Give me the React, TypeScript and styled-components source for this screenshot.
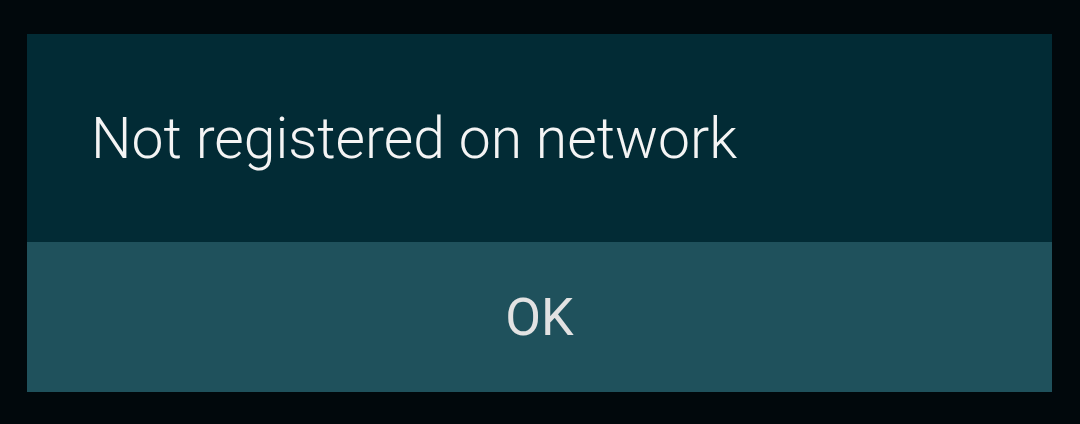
import React from "react";
import styled, { createGlobalStyle } from "styled-components";

const Global = createGlobalStyle`
  html, body { margin: 0; padding: 0; background: #01080c; }
  body { width: 1080px; height: 424px; overflow: hidden; font-family: Roboto, "Noto Sans", sans-serif; }
`;

const Screen = styled.div`
  width: 1080px;
  height: 424px;
  box-sizing: border-box;
  padding: 34px 28px 32px 27px;
  display: flex;
`;

const Dialog = styled.div`
  flex: 1;
  display: flex;
  flex-direction: column;
  background: #022b35;
`;

const Message = styled.div`
  height: 208px;
  box-sizing: border-box;
  padding: 0 0 0 64px;
  display: flex;
  align-items: center;
  color: #f4f4f4;
  font-size: 57px;
  font-weight: 300;
  letter-spacing: 0;
`;

const Button = styled.button`
  flex: 1;
  border: 0;
  margin: 0;
  background: #1f515c;
  color: #e2e2e2;
  font-family: Roboto, sans-serif;
  font-size: 52px;
  font-weight: 400;
  display: flex;
  align-items: center;
  justify-content: center;
  padding: 0;
`;

export default function App() {
  return (
    <>
      <Global />
      <Screen>
        <Dialog>
          <Message>Not registered on network</Message>
          <Button>OK</Button>
        </Dialog>
      </Screen>
    </>
  );
}
